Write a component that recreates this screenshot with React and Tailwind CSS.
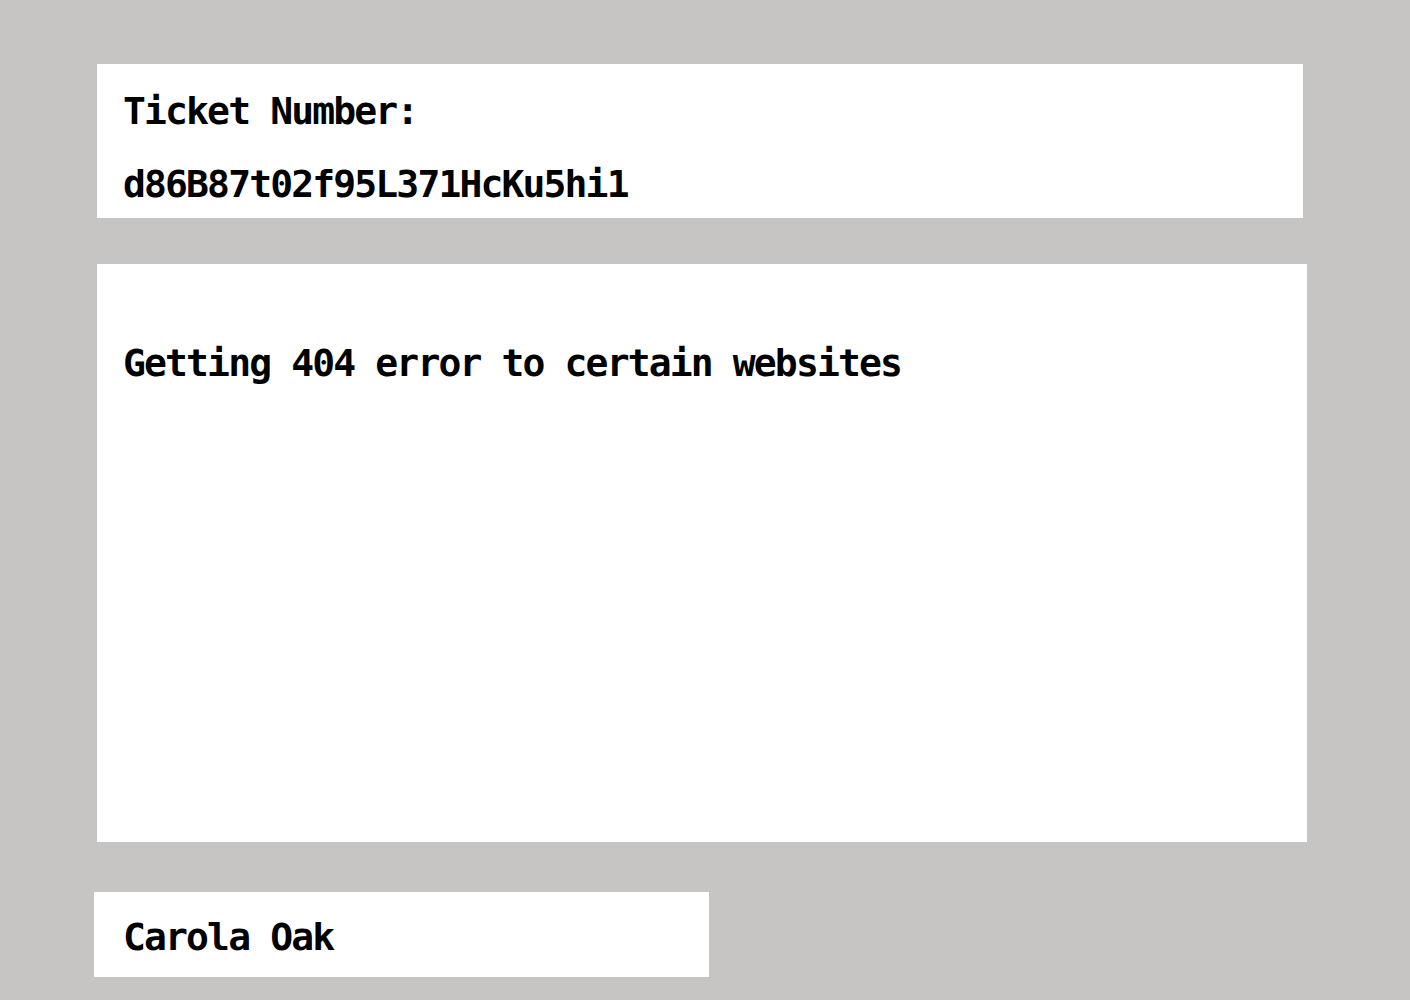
import React from "react";

const mono = { fontFamily: '"DejaVu Sans Mono", "Liberation Mono", monospace' };

export default function App() {
  return (
    <div className="min-h-screen bg-[#c6c5c3] pt-[64px]" style={mono}>
      <div className="ml-[97px] w-[1206px] bg-white pl-[26px] pt-[28px] pb-[15px] text-[38px] leading-none font-bold tracking-[-1.85px] text-black">
        <div>Ticket Number:</div>
        <div className="mt-[35px]">d86B87t02f95L371HcKu5hi1</div>
      </div>

      <div className="ml-[97px] mt-[46px] h-[578px] w-[1210px] bg-white pl-[26px] pt-[80px] text-[38px] leading-none font-bold tracking-[-1.85px] text-black">
        Getting 404 error to certain websites
      </div>

      <div className="ml-[94px] mt-[50px] h-[85px] w-[615px] bg-white pl-[29px] pt-[26px] text-[38px] leading-none font-bold tracking-[-1.85px] text-black">
        Carola Oak
      </div>
    </div>
  );
}
